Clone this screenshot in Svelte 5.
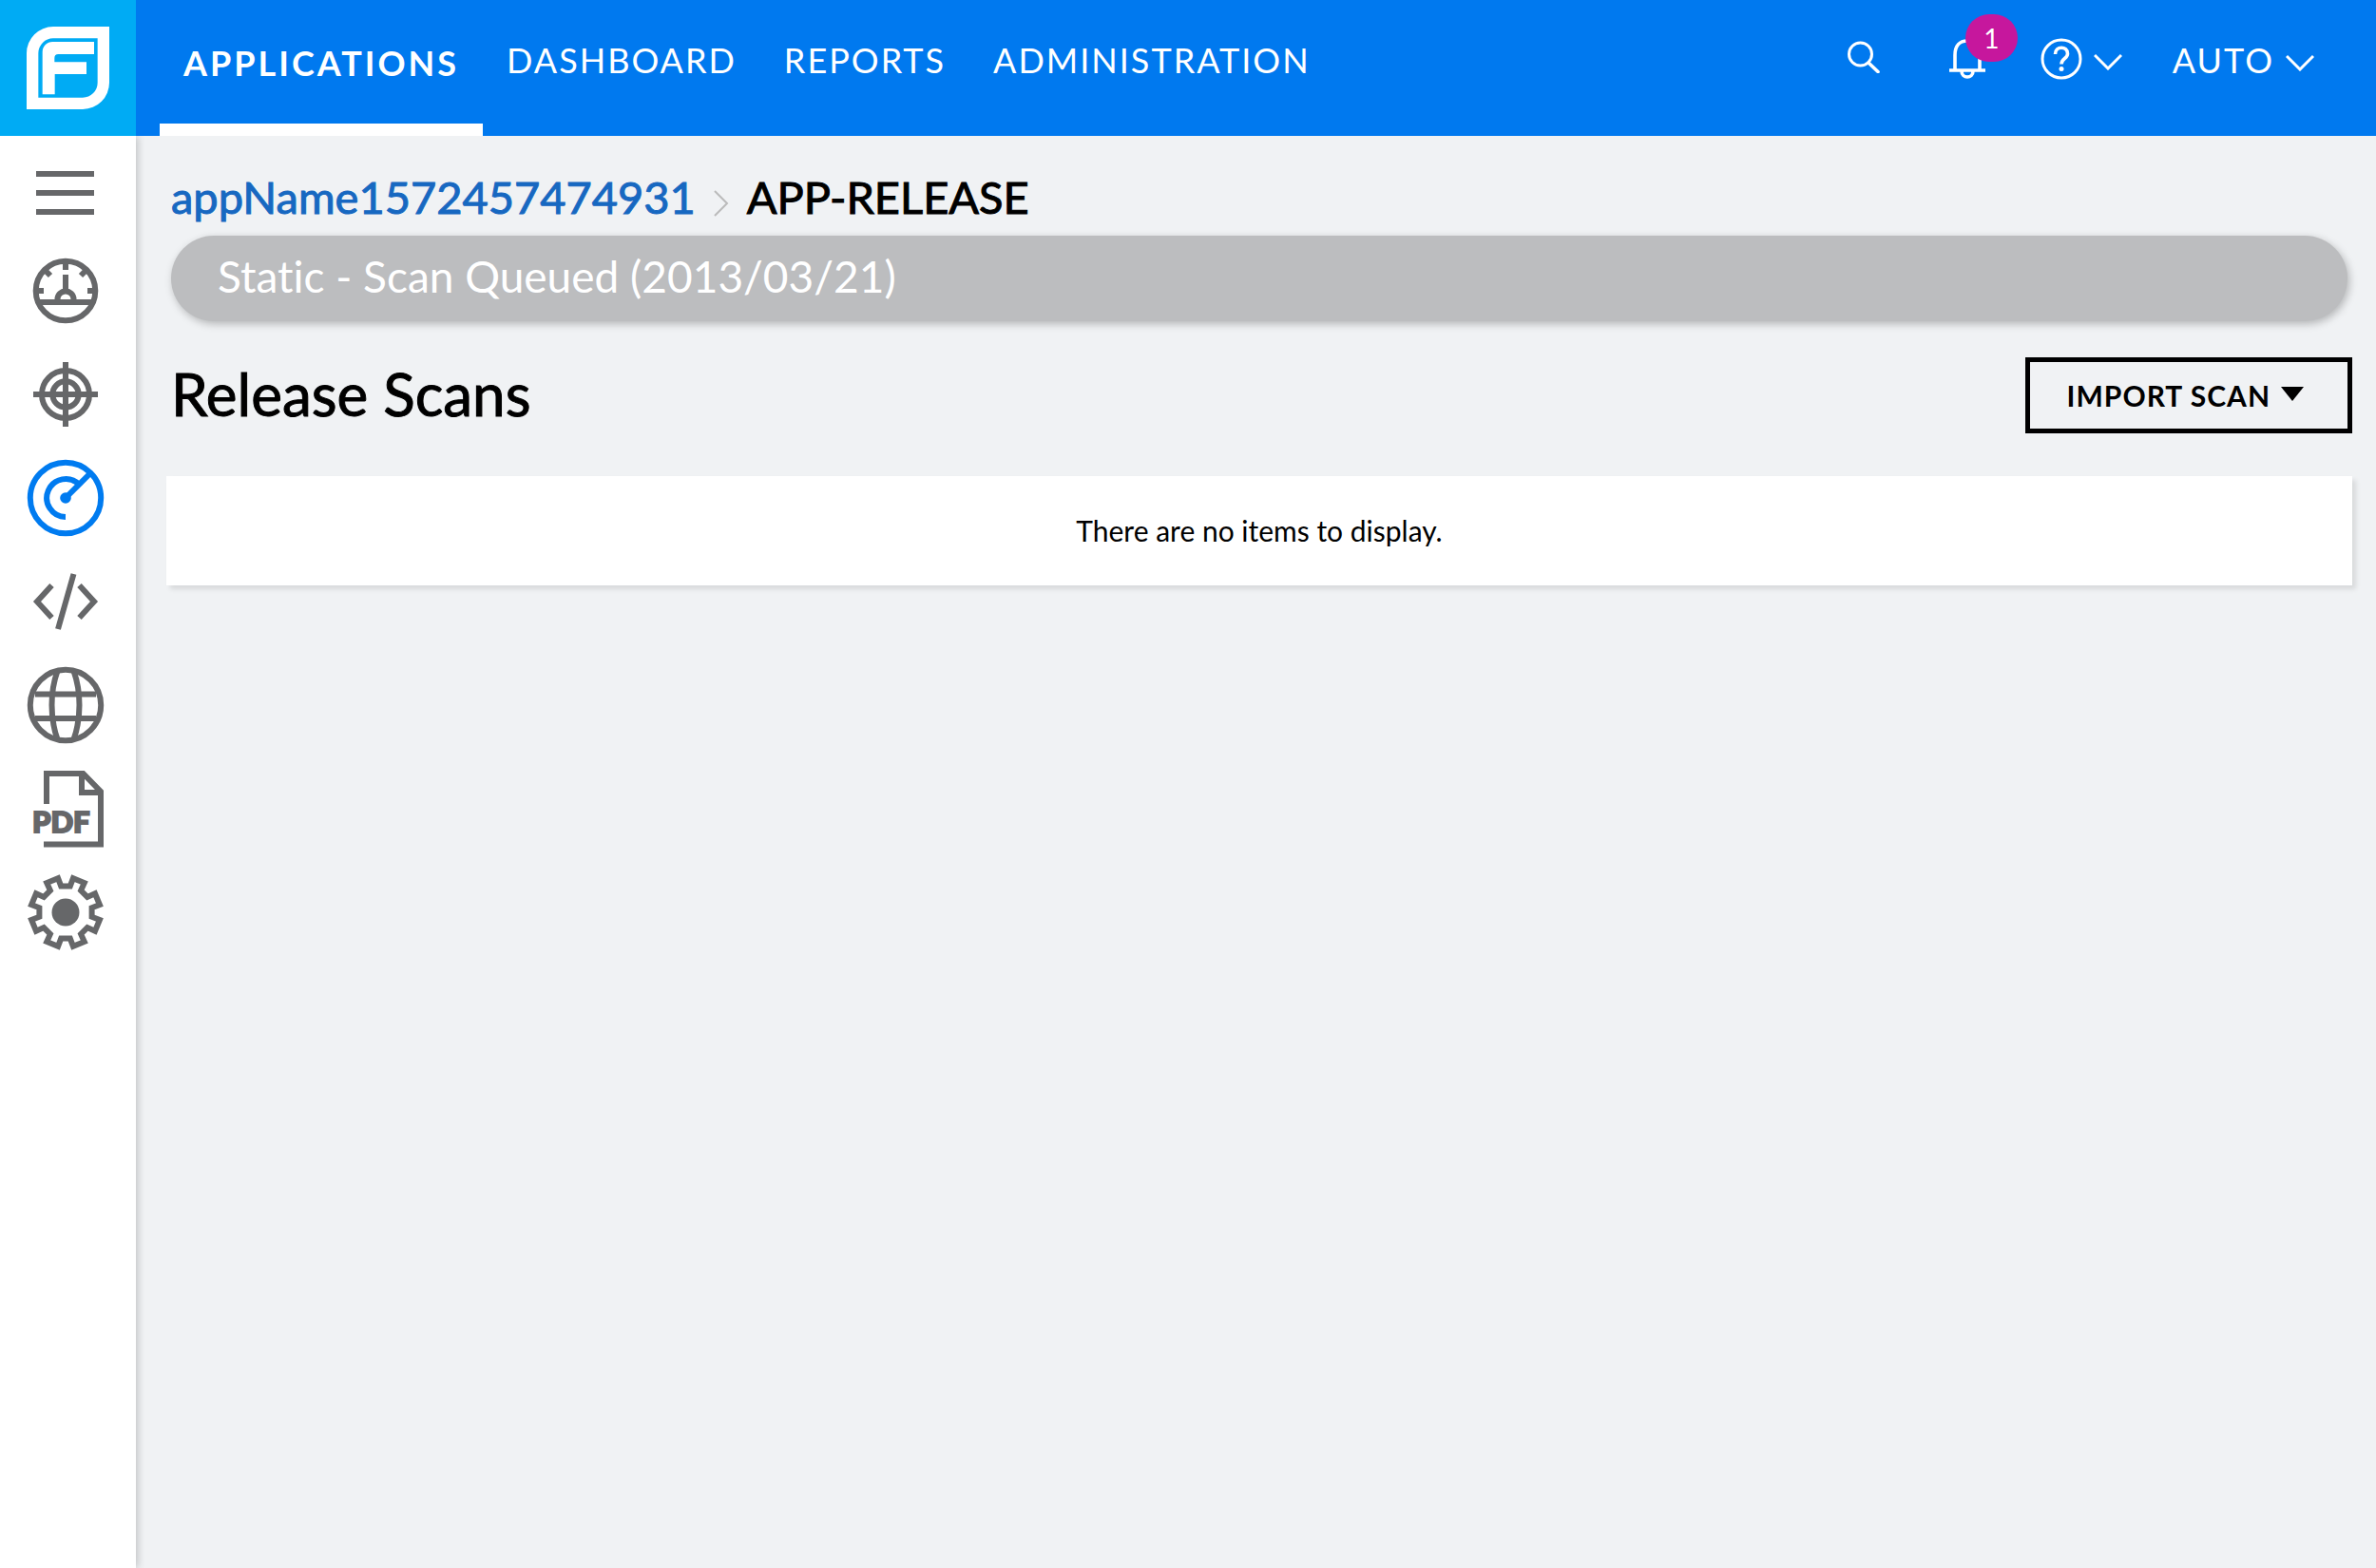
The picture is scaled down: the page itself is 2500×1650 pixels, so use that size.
<script>
  const links = ['DASHBOARD', 'REPORTS', 'ADMINISTRATION'];

  // Gear outline: eight notches with a tooth between each pair.
  function rotate(x, y, degrees) {
    const a = (degrees * Math.PI) / 180;
    const px = 48 + x * Math.cos(a) - y * Math.sin(a);
    const py = 48 + x * Math.sin(a) + y * Math.cos(a);
    return `${px.toFixed(2)},${py.toFixed(2)}`;
  }
  const gear = Array.from({ length: 8 }, (_, i) => [
    rotate(-4.8, -27.6, i * 45),
    rotate(4.8, -27.6, i * 45),
    rotate(-6.4, -36.2, i * 45 + 22.5),
    rotate(6.4, -36.2, i * 45 + 22.5)
  ]).flat().join(' ');
</script>

<div class="page">
  <header>
    <a class="logo" href="#home" aria-label="Home">
      <svg viewBox="0 0 429 429" aria-hidden="true">
        <path fill="#fff" fill-rule="evenodd" d="M168 84H345V261A84 84 0 0 1 261 345H84V168A84 84 0 0 1 168 84ZM168 121A47 47 0 0 0 121 168V308H261A47 47 0 0 0 308 261V121Z" />
        <path fill="#fff" d="M166 132H297V171H184Q172 171 172 183V196H273V234H173V298H134V164A32 32 0 0 1 166 132Z" />
      </svg>
    </a>
    <nav class="main-nav" aria-label="Main">
      <a class="current" href="#applications" aria-current="page">APPLICATIONS</a>
      {#each links as link}
        <a href="#{link.toLowerCase()}">{link}</a>
      {/each}
    </nav>
    <div class="tools">
      <button class="search" aria-label="Search">
        <svg width="34" height="34" viewBox="0 0 34 34"><circle cx="13.500" cy="14" r="12" /><path d="M22 23L32 32.500" stroke-width="3.600" stroke-linecap="round" /></svg>
      </button>
      <button class="bell" aria-label="Notifications">
        <svg width="38" height="42" viewBox="0 0 38 42"><path d="M0 33H38M6 33V17C6 7 11 2 19 2S32 7 32 17V33M13 34C13 42 25 42 25 34" stroke-width="3.600" /></svg>
        <span class="badge">1</span>
      </button>
      <button class="help" aria-label="Help">
        <svg width="44" height="44" viewBox="0 0 44 44"><circle cx="22" cy="22" r="20" /><path d="M15.500 17C15.500 8 28.500 8 28.500 16.500C28.500 22 22 21 22 27.500" stroke-width="3.600" /><circle cx="22" cy="32.500" r="2.500" fill="#fff" stroke="none" /></svg>
        <svg class="chevron" width="30" height="18" viewBox="0 0 30 18"><path d="M1 2L15 16L29 2" /></svg>
      </button>
      <button class="user">
        AUTO
        <svg class="chevron" width="30" height="18" viewBox="0 0 30 18"><path d="M1 2L15 16L29 2" /></svg>
      </button>
    </div>
  </header>

  <div class="body">
    <nav class="side" aria-label="Release">
      <button class="menu" aria-label="Toggle menu">
        <svg viewBox="0 0 96 96"><path d="M17 28H78M17 48H78M17 68H78" /></svg>
      </button>
      <a href="#overview" aria-label="Overview">
        <svg viewBox="0 0 96 96"><circle cx="48" cy="48" r="31.300" /><path d="M48 16V26M48 31V49M16 48H25M71 48H80M27 27L32 32M69 27L64 32M19 60H77M39.500 60V57A8.500 8.500 0 0 1 56.500 57V60" /></svg>
      </a>
      <a href="#issues" aria-label="Issues">
        <svg viewBox="0 0 96 96"><circle cx="48" cy="48" r="25" /><circle cx="48" cy="48" r="13.700" /><path d="M48 14V82M14 48H82" /></svg>
      </a>
      <a class="active" href="#scans" aria-label="Scans" aria-current="page">
        <svg viewBox="0 0 96 96"><circle cx="48" cy="48" r="37.200" /><path d="M48 48L74 22M48 68A20 20 0 1 1 62.500 34" /><circle class="solid" cx="48" cy="48" r="5.800" /></svg>
      </a>
      <a href="#code" aria-label="Code">
        <svg viewBox="0 0 96 96"><path d="M33.500 31L18 48L33.500 65M62.500 31L78 48L62.500 65M56.500 19L40 77" /></svg>
      </a>
      <a href="#web" aria-label="Web">
        <svg viewBox="0 0 96 96"><circle cx="48" cy="48" r="37.200" /><path d="M16 36.500H80M16 62H80M39.500 12C31.500 34 31.500 62 39.500 84M56.500 12C64.500 34 64.500 62 56.500 84" /></svg>
      </a>
      <a href="#reports-pdf" aria-label="PDF reports">
        <svg viewBox="0 0 96 96"><path d="M28 43V11H66.500L85 30V85.500H25M65 11V31H85" /><text x="13" y="73">PDF</text></svg>
      </a>
      <a href="#settings" aria-label="Settings">
        <svg viewBox="0 0 96 96"><polygon points={gear} /><circle class="solid" cx="48" cy="48" r="14.500" /></svg>
      </a>
    </nav>

    <main>
      <div class="crumbs">
        <a href="#app">appName1572457474931</a>
        <svg width="18" height="28" viewBox="0 0 18 28" aria-hidden="true"><path d="M2 1L15 14L2 27" /></svg>
        <span>APP-RELEASE</span>
      </div>
      <div class="status">Static - Scan Queued (2013/03/21)</div>
      <div class="title-row">
        <h1>Release Scans</h1>
        <button class="import">IMPORT SCAN <svg width="24" height="15" viewBox="0 0 24 15" aria-hidden="true"><path d="M0 0H24L12 15Z" /></svg></button>
      </div>
      <div class="card">There are no items to display.</div>
    </main>
  </div>
</div>

<style>
  :global(body) { background: #f0f2f4; }
  .page {
    min-height: 100vh;
    display: flex;
    flex-direction: column;
    font-family: Lato, "Open Sans", sans-serif;
    font-variant-ligatures: none;
    color: #000;
  }
  a { text-decoration: none; color: inherit; }
  button { border: 0; padding: 0; background: none; font: inherit; color: inherit; cursor: pointer; }
  svg { display: block; fill: none; flex: none; }

  header { display: flex; height: 143px; background: #0079ef; color: #fff; }
  .logo { width: 143px; background: #00abf4; }
  .main-nav { display: flex; padding-left: 25px; font-size: 36px; line-height: 44px; letter-spacing: 2px; }
  .main-nav a { padding: 41px 25px 0; box-sizing: border-box; }
  .main-nav .current { padding-top: 44px; font-weight: 700; letter-spacing: 3px; border-bottom: 13px solid #fff; }
  .tools { display: flex; align-items: flex-start; margin-left: auto; padding-right: 65px; font-size: 36px; line-height: 44px; }
  .tools svg { stroke: #fff; stroke-width: 3; }
  .search { padding-top: 43px; margin-right: 73px; }
  .bell { position: relative; padding-top: 41px; margin-right: 58px; }
  .badge {
    position: absolute; left: 17px; top: 15px;
    width: 55px; height: 50px; border-radius: 25px;
    background: #c6179d; font-size: 28px; line-height: 51px; text-align: center;
  }
  .help { display: flex; align-items: center; gap: 12px; padding-top: 40px; margin-right: 53px; }
  .user { display: flex; align-items: center; gap: 12px; padding-top: 41px; letter-spacing: 2px; }
  .tools .chevron { margin-top: 6px; }

  .body { display: flex; flex: 1; }
  .side {
    width: 138px; padding-right: 5px; flex: none;
    background: #fff; box-shadow: 2px 0 8px rgba(0, 0, 0, 0.2);
    clip-path: inset(0 -12px 0 0);
  }
  .side a, .side button { display: flex; align-items: center; justify-content: center; box-sizing: border-box; width: 100%; height: 109px; padding-bottom: 1px; }
  .side .menu { padding: 11px 0 0; }
  .side svg { width: 96px; height: 96px; stroke: #666769; stroke-width: 6; }
  .side .active svg { stroke: #007bf0; }
  .side .solid { fill: #666769; stroke: none; }
  .side .active .solid { fill: #007bf0; }
  .side text { fill: #666769; stroke-width: 2; font-size: 31px; font-weight: 900; }

  main { flex: 1; min-width: 0; padding: 36px 25px 0 32px; }
  .crumbs { display: flex; align-items: center; height: 56px; margin: 0 0 13px 5px; font-size: 47px; line-height: 56px; -webkit-text-stroke: 1px currentColor; }
  .crumbs a { color: #1768c1; }
  .crumbs svg { margin: 14px 18px 0; stroke: #bbb; stroke-width: 2; }
  .status {
    height: 90px; margin: 0 5px; padding-left: 49px; box-sizing: border-box;
    border-radius: 45px; background: #bcbdbf; color: #fff;
    font-size: 46px; line-height: 86px; box-shadow: 2px 3px 8px rgba(0, 0, 0, 0.25);
  }
  .title-row { display: flex; justify-content: space-between; align-items: center; margin-top: 38px; }
  h1 { margin: 0 0 0 5px; padding-bottom: 4px; font-size: 62px; line-height: 76px; font-weight: 400; -webkit-text-stroke: 1px currentColor; }
  .import {
    display: flex; align-items: center; gap: 11px; box-sizing: border-box;
    height: 80px; padding: 0 46px 0 39px; border: 5px solid #000;
    font-size: 30px; font-weight: 700; letter-spacing: 1px;
  }
  .import svg { fill: #000; margin-bottom: 4px; }
  .card {
    margin-top: 45px; background: #fff; height: 115px;
    font-size: 30px; line-height: 115px; text-align: center;
    box-shadow: 4px 4px 5px rgba(0, 0, 0, 0.1);
  }
</style>
